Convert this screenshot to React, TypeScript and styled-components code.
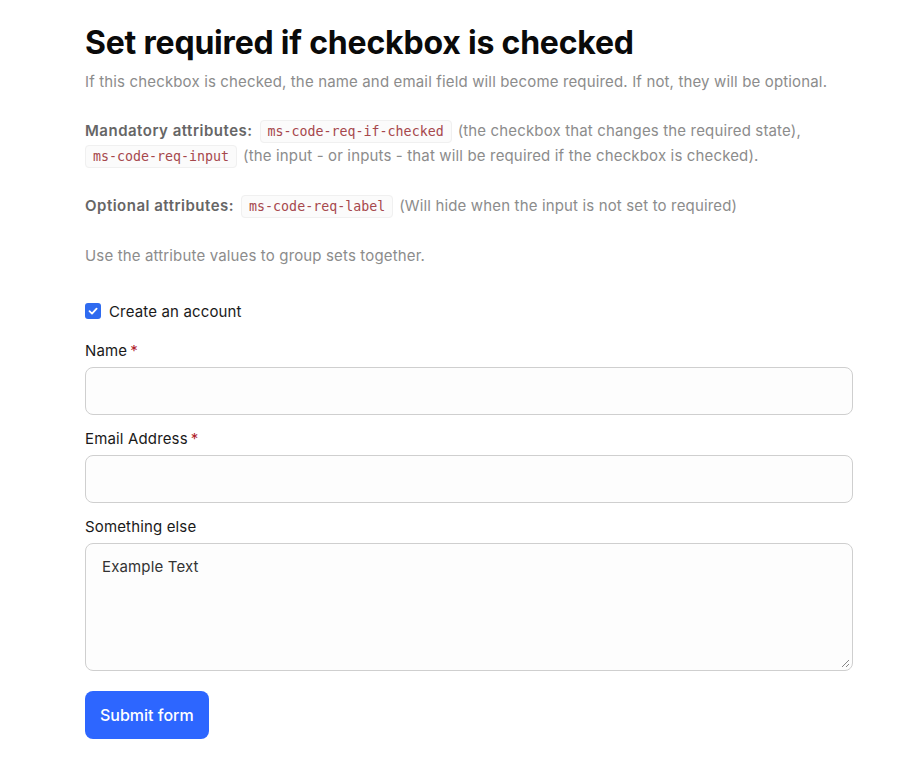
import React from "react";
import styled, { createGlobalStyle } from "styled-components";

const Global = createGlobalStyle`
  html, body { margin: 0; padding: 0; background: #fff; }
  body { font-family: Inter, "Noto Sans", sans-serif; letter-spacing: 0.15px; }
  * { box-sizing: border-box; }
`;

const Page = styled.div`
  padding: 22px 0 0 85px;
  width: 853px;
`;

const Title = styled.h1`
  margin: 0;
  font-size: 32px;
  font-weight: 700;
  color: #0a0a0a;
  letter-spacing: -0.2px;
  line-height: 42px;
`;

const Para = styled.p<{ $mt?: number }>`
  margin: ${(p) => p.$mt ?? 0}px 0 0;
  font-size: 15px;
  line-height: 25px;
  color: #8c8c8c;
  font-weight: 400;
`;

const Strong = styled.span`
  color: #666;
  font-weight: 600;
  letter-spacing: 0.5px;
  margin-right: 3px;
`;

const Code = styled.code<{ $first?: boolean }>`
  font-family: "DejaVu Sans Mono", "Liberation Mono", monospace;
  font-size: 13.3px;
  line-height: 1;
  letter-spacing: 0;
  font-weight: 400;
  color: #a6474c;
  background: #fbfbfb;
  border: 1px solid #f0f0f0;
  border-radius: 4px;
  padding: 3px 7px;
  margin: 0 6px 0 ${(p) => (p.$first ? 0 : 4)}px;
`;

const Form = styled.form`
  margin-top: 33px;
  display: flex;
  flex-direction: column;
`;

const CheckRow = styled.label`
  display: flex;
  align-items: center;
  gap: 8px;
  font-size: 15px;
  color: #1a1a1a;
  height: 20px;
`;

const Check = styled.span`
  width: 16px;
  height: 16px;
  border-radius: 3px;
  background: #2f6bf0;
  display: flex;
  align-items: center;
  justify-content: center;
`;

const Label = styled.label<{ $mt: number }>`
  margin-top: ${(p) => p.$mt}px;
  font-size: 15px;
  color: #1a1a1a;
  line-height: 20px;
  margin-bottom: 6px;
`;

const Star = styled.span`
  color: #b0222c;
  margin-left: 3px;
`;

const Input = styled.div`
  height: 48px;
  border: 1px solid #cfcfcf;
  border-radius: 8px;
  background: #fdfdfd;
`;

const TextArea = styled.div`
  position: relative;
  height: 128px;
  border: 1px solid #cfcfcf;
  border-radius: 8px;
  background: #fdfdfd;
  padding: 13px 16px;
  font-size: 15px;
  color: #333;
`;

const Grip = styled.svg`
  position: absolute;
  right: 2px;
  bottom: 2px;
`;

const Button = styled.button`
  margin-top: 20px;
  align-self: flex-start;
  height: 48px;
  padding: 0 15px;
  border: none;
  border-radius: 8px;
  background: #2d66ff;
  color: #fff;
  font-family: inherit;
  letter-spacing: 0;
  font-size: 16px;
  font-weight: 500;
`;

export default function App() {
  return (
    <>
      <Global />
      <Page>
        <Title>Set required if checkbox is checked</Title>
        <Para $mt={5}>
          If this checkbox is checked, the name and email field will become required. If not, they will be optional.
        </Para>
        <Para $mt={24}>
          <Strong>Mandatory attributes:</Strong>
          <Code>ms-code-req-if-checked</Code>(the checkbox that changes the required state),
          <br />
          <Code $first>ms-code-req-input</Code>(the input - or inputs - that will be required if the checkbox is checked).
        </Para>
        <Para $mt={25}>
          <Strong>Optional attributes:</Strong>
          <Code>ms-code-req-label</Code>(Will hide when the input is not set to required)
        </Para>
        <Para $mt={25}>Use the attribute values to group sets together.</Para>
        <Form>
          <CheckRow>
            <Check>
              <svg width="12" height="12" viewBox="0 0 12 12">
                <path d="M2.5 6.2 L5 8.6 L9.6 3.6" fill="none" stroke="#fff" strokeWidth="1.8" strokeLinecap="round" strokeLinejoin="round" />
              </svg>
            </Check>
            Create an account
          </CheckRow>
          <Label $mt={20}>
            Name<Star>*</Star>
          </Label>
          <Input />
          <Label $mt={14}>
            Email Address<Star>*</Star>
          </Label>
          <Input />
          <Label $mt={14}>Something else</Label>
          <TextArea>
            Example Text
            <Grip width="10" height="10" viewBox="0 0 10 10">
              <path d="M9 2 L2 9 M9 6 L6 9" stroke="#888" strokeWidth="1" />
            </Grip>
          </TextArea>
          <Button type="button">Submit form</Button>
        </Form>
      </Page>
    </>
  );
}
